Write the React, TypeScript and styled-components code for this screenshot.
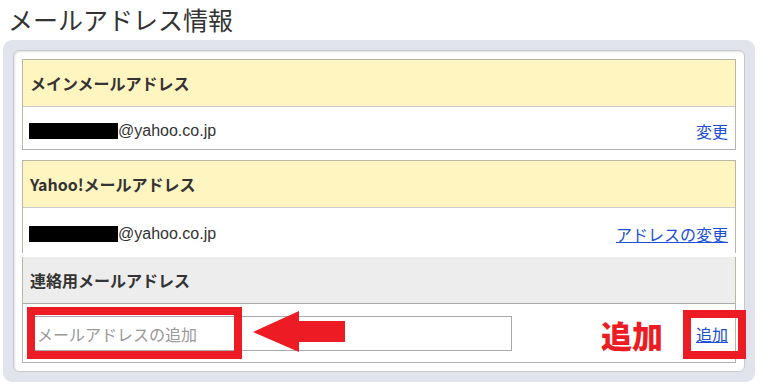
import styled, { createGlobalStyle } from "styled-components";

const GlobalStyle = createGlobalStyle`
  body {
    margin: 0;
    background: #fff;
    font-family: "Liberation Sans", "Noto Sans CJK JP", sans-serif;
    color: #333;
  }
`;

const Page = styled.div`
  position: relative;
  width: 764px;
  height: 389px;
`;

const Title = styled.h1`
  margin: 0;
  padding-left: 8px;
  height: 40px;
  line-height: 38px;
  font-size: 25px;
  font-weight: normal;
  font-family: "Noto Sans CJK JP", sans-serif;
  color: #333;
`;

const Panel = styled.div`
  margin: 0 9px 0 3px;
  padding: 10px;
  background: #e1e4ec;
  border-radius: 9px;
`;

const Card = styled.div`
  background: #fff;
  border: 1px solid #c8c8c8;
  border-radius: 6px;
  box-shadow: inset 1px 1px 2px rgba(0, 0, 0, 0.12);
  padding: 8px;
  display: flex;
  flex-direction: column;
  gap: 10px;
`;

const Block = styled.div`
  display: flex;
  flex-direction: column;
  border: 1px solid #b8b6a6;
  border-bottom-color: #b0b0b0;
`;

const Header = styled.div<{ $tone: "yellow" | "gray" }>`
  height: 46px;
  display: flex;
  align-items: center;
  padding: 0 7px;
  background: ${(p) => (p.$tone === "yellow" ? "#fef5c1" : "#ededed")};
  border-bottom: 1px solid ${(p) => (p.$tone === "yellow" ? "#cccccc" : "#aaaaaa")};
  font-family: "Noto Sans CJK JP", sans-serif;
  font-weight: bold;
  font-size: 16px;
  color: #333;
`;

const Row = styled.div<{ $h: number }>`
  height: ${(p) => p.$h}px;
  display: flex;
  align-items: center;
  justify-content: space-between;
  padding: 6px 7px 0 6px;
  box-sizing: border-box;
  font-size: 16px;
`;

const Gap = styled.div`
  height: 4px;
  margin: 0 -1px;
  background: #fff;
`;

const Email = styled.span`
  display: flex;
  align-items: center;
`;

const Mask = styled.span`
  display: inline-block;
  width: 89px;
  height: 16px;
  background: #000;
`;

const Link = styled.a<{ $underline?: boolean }>`
  color: #1a4fd6;
  font-family: "Noto Sans CJK JP", sans-serif;
  font-size: 16px;
  text-decoration: ${(p) => (p.$underline ? "underline" : "none")};
  cursor: pointer;
`;

const AddRow = styled.div`
  height: 58px;
  display: flex;
  align-items: center;
  justify-content: space-between;
  padding: 1px 7px 0 11px;
  box-sizing: border-box;
`;

const Input = styled.input`
  width: 478px;
  height: 35px;
  box-sizing: border-box;
  border: 1px solid #aaa;
  padding: 0 2px;
  font-size: 16px;
  font-family: "Noto Sans CJK JP", sans-serif;
  color: #333;
  outline: none;
  &::placeholder {
    color: #999;
  }
`;

const RedFrame = styled.div<{ $x: number; $y: number; $w: number; $h: number }>`
  position: absolute;
  left: ${(p) => p.$x}px;
  top: ${(p) => p.$y}px;
  width: ${(p) => p.$w}px;
  height: ${(p) => p.$h}px;
  box-sizing: border-box;
  border: 8px solid #ed1c24;
  pointer-events: none;
`;

const Arrow = styled.svg`
  position: absolute;
  left: 253px;
  top: 311px;
`;

const BigLabel = styled.div`
  position: absolute;
  left: 601px;
  top: 315px;
  font-family: "Noto Sans CJK JP", sans-serif;
  font-weight: 900;
  font-size: 31px;
  line-height: 40px;
  color: #ed1c24;
`;

export default function App() {
  return (
    <Page>
      <GlobalStyle />
      <Title>メールアドレス情報</Title>
      <Panel>
        <Card>
          <Block>
            <Header $tone="yellow">メインメールアドレス</Header>
            <Row $h={42}>
              <Email>
                <Mask />
                @yahoo.co.jp
              </Email>
              <Link>変更</Link>
            </Row>
          </Block>
          <Block>
            <Header $tone="yellow">Yahoo!メールアドレス</Header>
            <Row $h={45}>
              <Email>
                <Mask />
                @yahoo.co.jp
              </Email>
              <Link $underline>アドレスの変更</Link>
            </Row>
            <Gap />
            <Header $tone="gray">連絡用メールアドレス</Header>
            <AddRow>
              <Input placeholder="メールアドレスの追加" />
              <Link $underline>追加</Link>
            </AddRow>
          </Block>
        </Card>
      </Panel>
      <RedFrame $x={27} $y={307} $w={215} $h={52} />
      <Arrow width="92" height="41" viewBox="0 0 92 41">
        <polygon points="0,21 46,0 46,10 92,10 92,31 46,31 46,41" fill="#ed1c24" />
      </Arrow>
      <BigLabel>追加</BigLabel>
      <RedFrame $x={683} $y={310} $w={63} $h={49} />
    </Page>
  );
}
